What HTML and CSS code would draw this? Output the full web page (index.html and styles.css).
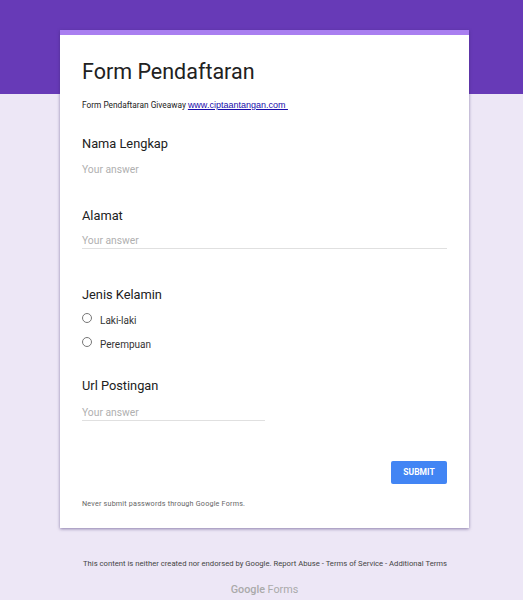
FILE: index.html
```html
<!DOCTYPE html>
<html lang="en">

<head>
    <title>Form Pendaftaran</title>
    <link rel="stylesheet" href="styles.css">
</head>

<body>
    <div class="banner"></div>

    <div class="card">
        <div class="title">Form Pendaftaran</div>
        <div class="description">Form Pendaftaran Giveaway <a href="#">www.ciptaantangan.com&nbsp;</a></div>

        <div class="question q-nama">
            <div class="label">Nama Lengkap</div>
            <div class="answer no-line">Your answer</div>
        </div>

        <div class="question q-alamat">
            <div class="label">Alamat</div>
            <div class="answer">Your answer</div>
        </div>

        <div class="question q-jenis">
            <div class="label">Jenis Kelamin</div>
            <div class="option"><span class="radio"></span>Laki-laki</div>
            <div class="option"><span class="radio"></span>Perempuan</div>
        </div>

        <div class="question q-url">
            <div class="label">Url Postingan</div>
            <div class="answer short">Your answer</div>
        </div>

        <div class="actions">
            <div class="submit">SUBMIT</div>
        </div>
        <div class="warning">Never submit passwords through Google Forms.</div>
    </div>

    <div class="footer">This content is neither created nor endorsed by Google. Report Abuse - Terms of Service - Additional Terms</div>
    <div class="brand"><span class="brand-google">Google</span> Forms</div>
</body>

</html>
```

FILE: styles.css
```css
body {
    margin: 0;
    height: 600px;
    overflow: hidden;
    background-color: #ede7f6;
    font-family: Roboto, "Liberation Sans", sans-serif;
    color: #212121;
}

.banner {
    height: 94px;
    background-color: #673ab7;
}

.card {
    box-sizing: border-box;
    width: 409px;
    height: 498px;
    margin: -64px 0 0 60px;
    padding: 0 22px;
    background-color: #fff;
    border-top: 5px solid #a97ff0;
    box-shadow: 0 1px 3px rgba(60, 40, 110, 0.55);
}

.title {
    margin-top: 23px;
    font-size: 21.5px;
    line-height: 28px;
}

.description {
    margin-top: 13px;
    font-size: 8.3px;
    line-height: 12px;
}

.description a {
    color: #1a0dab;
    font-family: "Liberation Sans", sans-serif;
    font-size: 9px;
}

.label {
    font-size: 12.8px;
    line-height: 16px;
}

.q-nama {
    margin-top: 25px;
}

.q-alamat {
    margin-top: 31px;
}

.q-jenis {
    margin-top: 38px;
}

.q-url {
    margin-top: 22px;
}

.answer {
    margin-top: 10px;
    font-size: 10.3px;
    line-height: 14px;
    color: #b0b0b0;
    border-bottom: 1px solid #e0e0e0;
}

.answer.no-line {
    margin-top: 11px;
    border-bottom: none;
}

.answer.short {
    width: 183px;
    margin-top: 12px;
}

.option {
    display: flex;
    align-items: center;
    height: 24px;
    font-size: 10px;
    color: #333;
}

.label + .option {
    margin-top: 5px;
}

.radio {
    box-sizing: border-box;
    width: 10px;
    height: 10px;
    margin: -4px 8px 0 0;
    border: 1px solid #777;
    border-radius: 50%;
}

.actions {
    display: flex;
    justify-content: flex-end;
    margin-top: 40px;
}

.submit {
    width: 56px;
    height: 23px;
    border-radius: 2px;
    background-color: #4285f4;
    color: #fff;
    font-size: 8.5px;
    font-weight: 700;
    line-height: 23px;
    text-align: center;
}

.warning {
    margin-top: 15px;
    font-size: 7.2px;
    line-height: 10px;
    color: #666;
    letter-spacing: 0.2px;
}

.footer {
    margin-top: 30px;
    padding-left: 83px;
    font-size: 7.7px;
    line-height: 12px;
    color: #444;
    white-space: nowrap;
}

.brand {
    margin-top: 12px;
    text-align: center;
    font-size: 10.8px;
    line-height: 16px;
    color: #aaa;
    padding-left: 6px;
}

.brand-google {
    font-weight: 500;
}
```
